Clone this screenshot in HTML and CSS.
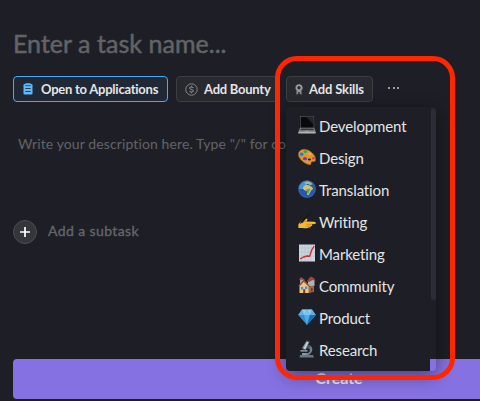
FILE: index.html
```html
<!DOCTYPE html>
<html lang="en">
<head>
<meta charset="utf-8">
<title>Create task</title>
<link rel="stylesheet" href="styles.css">
</head>
<body>
<main class="task-form">
  <h1 class="task-name"><span>Enter a task name...</span></h1>
  <div class="toolbar">
    <button class="chip chip-active chip-apply">
      <svg class="chip-icon" width="10" height="12" viewBox="0 0 10 12"><rect x=".5" y="1" width="9" height="10.5" rx="1.3" fill="#63b8fa"/><path d="M2.5.2h5v2.2h-5z" fill="#63b8fa"/><path d="M2.2 2.6h5.6" stroke="#1c4161" stroke-width=".8"/><path d="M2.3 5.5h5.4M2.3 8.5h5.4" stroke="#1c4161" stroke-width="1"/></svg>
      <span>Open to Applications</span>
    </button>
    <button class="chip chip-bounty">
      <svg class="chip-icon" width="13" height="13" viewBox="0 0 13 13" fill="none" stroke="#85858a"><circle cx="6.5" cy="6.5" r="5.7" stroke-width="1"/><path d="M8.4 4.8C8 3.9 4.7 3.5 4.7 5.2s3.7 1 3.7 2.6-3.3 1.5-3.8.4M6.5 2.8v1.4M6.5 8.8v1.4" stroke-width="1.1"/></svg>
      <span>Add Bounty</span>
    </button>
    <button class="chip chip-skills">
      <svg class="chip-icon" width="8" height="11" viewBox="0 0 8 11"><path d="M1.5 6.4v4.3l1.8-.9V8h1.4v1.8l1.8.9V6.4z" fill="#909095"/><circle cx="4" cy="3.8" r="2.5" fill="#29292e" stroke="#a0a0a5" stroke-width="1.6"/><circle cx="4" cy="3.8" r="3.3" fill="none" stroke="#909095" stroke-width=".8" stroke-dasharray="1.4 .7"/></svg>
      <span>Add Skills</span>
    </button>
    <button class="more" aria-label="More"><i></i><i></i><i></i></button>
  </div>
  <p class="description"><span>Write your description here. Type "/" for co</span></p>
  <div class="subtask">
    <span class="plus"><svg width="12" height="12" viewBox="0 0 12 12"><path d="M6 1v10M1 6h10" stroke="#fff" stroke-width="1.7"/></svg></span>
    <span class="subtask-label">Add a subtask</span>
  </div>
  <button class="create"><span>Create</span></button>
</main>

<div class="menu">
  <ul class="menu-list">
    <li><svg class="emoji" viewBox="0 0 18 18"><path d="M2 0h14l.3 12H2z" fill="#55575a"/><path d="M2.7 .8h12.5l.4 10.6H2.7z" fill="#08090b"/><path d="m8 .8 7.2 0 .4 8z" fill="#23252a"/><path d="M2 12h14.3l1.4 4H.3z" fill="#85878a"/><path d="M3 12.5h12.4l.6 1.7H2.2z" fill="#35373a"/><path d="M.3 16h17.4v1.5H.3z" fill="#b5b4b2"/><path d="M7 14.7h4l.3 1H6.7z" fill="#a5a5a5"/></svg><span>Development</span></li>
    <li><svg class="emoji" viewBox="0 0 18 18"><path d="M.5 5C2-.2 9 .2 13.5 4.2c3.4 2.6 4.8 6.5 3.9 8.6-.8 1.7-2.7.3-3.8 1.1-1.2.8.3 2.4-1.4 2.9C8.5 17.5-1.2 10.5.5 5z" fill="#dc963d" stroke="#8b5420" stroke-width=".5"/><circle cx="3.7" cy="6.2" r="1.7" fill="#2379d0"/><circle cx="7.4" cy="3.6" r="1.6" fill="#30a94b"/><ellipse cx="11.7" cy="6" rx="1.6" ry="1.2" fill="#e9b52b"/><ellipse cx="7" cy="10.7" rx="2.1" ry="1.6" fill="#743abb"/><circle cx="15.4" cy="10.2" r="1.3" fill="#dd4037"/><ellipse cx="11.4" cy="11.5" rx="1.5" ry="1.1" fill="#1e1f26"/></svg><span>Design</span></li>
    <li><svg class="emoji" viewBox="0 0 18 18"><circle cx="9" cy="9" r="8.7" fill="#2459aa"/><path d="M1.5 6C3 2 7 .5 11 1.5L8 5 4 9 1 9z" fill="#4a91d8"/><path d="M5.8 6.2 8 4.8l3.2.4 2.6 1.8 1.6 2-1.6.8-1.5 2.3-1.5 2.8-1.5.2-.5-4-2.5-.8-1.8-2z" fill="#c8c27b"/><path d="m8.3 9.3 4-.6-1.8 4.7-.8.3z" fill="#6c9a55"/><path d="m6.5 2.6 3-1.3 3.7 1.2 1.4 2-2.4.4-2-1-3 .7z" fill="#a2b891"/><circle cx="9" cy="9" r="8.3" fill="none" stroke="#5ba5ea" stroke-opacity=".45" stroke-width=".6"/></svg><span>Translation</span></li>
    <li><svg class="emoji" viewBox="0 0 18 18"><path d="M.4 12.2C2.5 9.5 4.8 8 7.5 6.6c1.8-.7 2.5.5 1.5 1.8l-.8 1 8.3.4c1.7.2 1.8 2 .2 2.2l-3 .2c1 .8.3 1.8-.8 1.9.2 1.1-1 1.6-2.2 1.5-1 1-4 .8-6.2.3L.4 16z" fill="#f5b936"/><path d="M8.5 12.2l5 .1M8 14.2l4.6 0M5.4 10.3l3-1.4" stroke="#b97918" stroke-width=".7"/><path d="m2.7 9.7 8-8.2 2-1-.9 2-7.7 8.7z" fill="#17191e"/><path d="m3 9.3-1.4 2.6 2.5-1.2z" fill="#17191e"/></svg><span>Writing</span></li>
    <li><svg class="emoji" viewBox="0 0 18 18"><path d="M1 .5h16v17H1z" fill="#cbd5df"/><path d="M4 1v16M7 1v16M10 1v16M13 1v16M1 4h16M1 8h16M1 12h16" stroke="#aabac8" stroke-width=".45"/><path d="m2 15 3.8-2 3-1 2.8.2 2.1-6.1L16.2 2" fill="none" stroke="#cd3036" stroke-width="1.4"/></svg><span>Marketing</span></li>
    <li><svg class="emoji" viewBox="0 0 18 18"><path d="M10 4h6.5v6H10z" fill="#aeb3b6"/><path d="m9 5 3.5-4.5L16 2l1.5 3-3-1-3.5 2z" fill="#934b43"/><path d="M2 3h4v6H2z" fill="#a3a7ac"/><path d="m1 4 2-3 4 3z" fill="#a84f43"/><path d="M1.5 9 6 5l5 4v8H1.5z" fill="#ebc68c"/><path d="m.4 9.5 5.3-6 6 6-1.2 1L5.8 6l-4.4 4.5z" fill="#9e5140"/><path d="M10.5 10.5 16 9.5V16l-5.5 1z" fill="#9b6a47"/><path d="M3 11h2.2v2.5H3zM7 10.5h2.2V13H7z" fill="#4792bd"/><path d="M5.2 13.2h2v4h-2zM13 12h1.6v3.6H13z" fill="#633e31"/></svg><span>Community</span></li>
    <li><svg class="emoji" viewBox="0 0 18 18"><path d="M4 1.5h10L17.8 7 9 17 .2 7z" fill="#358ed1"/><path d="m4 1.5-3.8 5.5H6zM14 1.5 17.8 7H12z" fill="#62aee0"/><path d="M4 1.5h10l-2 5.5L9 1.5 6 7z" fill="#8fcdf0"/><path d="M6 7h6l-3 10z" fill="#4faee8"/><path d="M12 7h5.8L9 17z" fill="#1870b4"/><path d="m9 1.5 3 5.5H6z" fill="#79c6ef"/></svg><span>Product</span></li>
    <li><svg class="emoji" viewBox="0 0 18 18"><path d="M2 15h13l1 2.5H1.5z" fill="#657985"/><path d="M4 13h6v2H4z" fill="#8299a6"/><path d="M11 5c4.4 1.5 4.6 7-.4 10H8l.5-1.5c4.2-.8 4.3-4.3 1.5-6z" fill="#6c8594"/><path d="M2.5 10.3h7v1.3h-7z" fill="#adb9bf"/><path d="m8.8.5 2.7 1.3L7.7 10 4 8.2z" fill="#839aa8"/><path d="m9.5 1 1.2.6-3.8 7.6-1.2-.6z" fill="#cfdae0"/><path d="M8.5.2 12 1.7l-.5 1L8 1z" fill="#34434d"/><circle cx="10.8" cy="7" r="1.8" fill="#485e6c"/><path d="m4.4 8.3 2.5 1.2-.5 1-2.3-1.1z" fill="#37464f"/></svg><span>Research</span></li>
  </ul>
  <div class="scrollbar"></div>
</div>
<div class="highlight"></div>
</body>
</html>
```

FILE: styles.css
```css
* { box-sizing: border-box; }
html { overflow: hidden; }
body {
  margin: 0;
  width: 480px;
  height: 401px;
  overflow: hidden;
  background: #1e1f26;
  color: #e4e4e5;
  font-family: Lato, "Liberation Sans", sans-serif;
}
button { font: inherit; color: inherit; margin: 0; padding: 0; border: 0; background: none; }
.task-form {
  display: flex;
  flex-direction: column;
  width: 678px;
  height: 401px;
  padding: 27px 13px 2px;
}
.task-name {
  margin: 0;
  height: 32px;
  line-height: 32px;
  font-size: 25px;
  font-weight: 400;
  letter-spacing: .03px;
  color: #626367;
  -webkit-text-stroke: .5px #626367;
}
.toolbar { display: flex; margin-top: 17px; height: 26px; gap: 8px; }
.chip {
  display: flex;
  align-items: center;
  height: 26px;
  border: 1px solid #3d3e43;
  border-radius: 4px;
  background: #28292f;
  font-size: 13px;
  font-weight: 700;
  white-space: nowrap;
}
.chip span { letter-spacing: -.25px; }
.chip-icon { flex: none; }
.chip-active { border-color: #4aa8f5; background: #202735; }
.chip-apply { width: 155px; padding-left: 9px; gap: 8px; }
.chip-apply span { letter-spacing: -.24px; }
.chip-bounty { width: 102px; padding-left: 8px; gap: 6px; }
.chip-skills { width: 87px; padding-left: 8px; gap: 6px; }
.chip-skills span { letter-spacing: -.15px; }
.more { display: flex; align-items: center; gap: 2.5px; padding: 0 0 2px 7px; }
.more i { width: 2px; height: 2px; border-radius: 1px; background: #c8c8ca; }
.description {
  margin: 32px 0 0 5px;
  height: 20px;
  line-height: 20px;
  font-size: 14px;
  letter-spacing: .11px;
  color: #626367;
}
.subtask { display: flex; align-items: center; gap: 11px; margin-top: 66px; height: 24px; }
.plus {
  display: grid;
  place-items: center;
  width: 24px;
  height: 24px;
  border: 1px solid #4c4d51;
  border-radius: 50%;
  background: #35363b;
}
.subtask-label {
  padding-bottom: 3px;
  font-size: 14px;
  letter-spacing: .4px;
  color: #66676b;
  -webkit-text-stroke: .3px #66676b;
}
.create {
  width: 652px;
  height: 40px;
  margin-top: auto;
  padding-bottom: 4px;
  border-radius: 4px;
  background: #8671e2;
  font-size: 16px;
  font-weight: 700;
  color: #e4e4e5;
}
.menu {
  position: absolute;
  left: 286px;
  top: 107px;
  display: flex;
  width: 150px;
  height: 264px;
  border-radius: 4px;
  overflow: hidden;
  box-shadow: 0 4px 18px rgba(0, 0, 0, .48);
}
.menu-list {
  width: 144px;
  margin: 0;
  padding: 3px 0 0 12px;
  list-style: none;
  background: #1e1f26;
}
.menu-list li { display: flex; align-items: center; height: 32px; gap: 3px; font-size: 15px; letter-spacing: -.13px; }
.menu-list .emoji { width: 18px; height: 18px; flex: none; margin-bottom: 2px; }
.scrollbar { width: 5px; height: 192px; margin: 1px 0 0 1px; border-radius: 3px; background: #2b2c36; }
.highlight {
  position: absolute;
  left: 275px;
  top: 56px;
  width: 180px;
  height: 324px;
  border: 5px solid #ff2600;
  border-radius: 22px;
}
```
